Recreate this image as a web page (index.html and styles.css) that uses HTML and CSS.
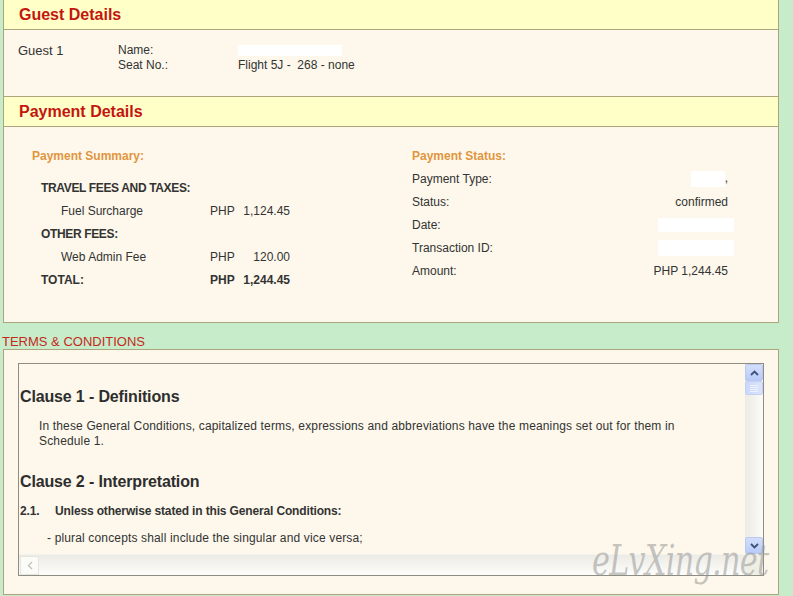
FILE: index.html
```html
<!DOCTYPE html>
<html lang="en">
<head>
    <meta charset="utf-8">
    <title>Booking Details</title>
    <link rel="stylesheet" href="styles.css">
</head>
<body>
    <div class="page">
        <div class="panel">
            <div class="panel-head"><h2>Guest Details</h2></div>
            <div class="panel-body guest">
                <div class="guest-no">Guest 1</div>
                <div class="guest-fields">
                    <span>Name:</span><span><span class="redact name-redact"></span></span>
                    <span>Seat No.:</span><span>Flight 5J -&nbsp; 268 - none</span>
                </div>
            </div>
            <div class="panel-head"><h2>Payment Details</h2></div>
            <div class="panel-body payment">
                <div class="summary">
                    <div class="sub-title">Payment Summary:</div>
                    <div class="fees">
                        <div class="fee-row group">TRAVEL FEES AND TAXES:</div>
                        <div class="fee-row">
                            <span class="fee-label item">Fuel Surcharge</span>
                            <span class="fee-cur">PHP</span>
                            <span class="fee-amt">1,124.45</span>
                        </div>
                        <div class="fee-row group">OTHER FEES:</div>
                        <div class="fee-row">
                            <span class="fee-label item">Web Admin Fee</span>
                            <span class="fee-cur">PHP</span>
                            <span class="fee-amt">120.00</span>
                        </div>
                        <div class="fee-row total">
                            <span class="fee-label">TOTAL:</span>
                            <span class="fee-cur">PHP</span>
                            <span class="fee-amt">1,244.45</span>
                        </div>
                    </div>
                </div>
                <div class="status">
                    <div class="sub-title">Payment Status:</div>
                    <div class="status-row"><span>Payment Type:</span><span><span class="redact type-redact"></span>,</span></div>
                    <div class="status-row"><span>Status:</span><span>confirmed</span></div>
                    <div class="status-row"><span>Date:</span><span class="off-right"><span class="redact date-redact"></span></span></div>
                    <div class="status-row"><span>Transaction ID:</span><span class="off-right"><span class="redact id-redact"></span></span></div>
                    <div class="status-row"><span>Amount:</span><span>PHP 1,244.45</span></div>
                </div>
            </div>
        </div>

        <div class="tc-title">TERMS &amp; CONDITIONS</div>
        <div class="tc-panel">
            <div class="tc-box">
                <div class="tc-content">
                    <h3>Clause 1 - Definitions</h3>
                    <p class="clause-text">In these General Conditions, capitalized terms, expressions and abbreviations have the meanings set out for them in<br>Schedule 1.</p>
                    <h3 class="second">Clause 2 - Interpretation</h3>
                    <p class="clause-num"><span class="num">2.1.</span>Unless otherwise stated in this General Conditions:</p>
                    <p class="clause-item">- plural concepts shall include the singular and vice versa;</p>
                </div>
                <div class="vbar">
                    <div class="sb-btn">
                        <svg width="9" height="6" viewBox="0 0 9 6"><path d="M1 5 L4.5 1.5 L8 5" fill="none" stroke="#3e5278" stroke-width="1.8"/></svg>
                    </div>
                    <div class="sb-thumb"><i></i><i></i><i></i><i></i></div>
                    <div class="sb-track"></div>
                    <div class="sb-btn">
                        <svg width="9" height="6" viewBox="0 0 9 6"><path d="M1 1 L4.5 4.5 L8 1" fill="none" stroke="#3e5278" stroke-width="1.8"/></svg>
                    </div>
                </div>
                <div class="hbar">
                    <div class="sb-btn-off">
                        <svg width="6" height="9" viewBox="0 0 6 9"><path d="M5 1 L1.5 4.5 L5 8" fill="none" stroke="#c4c4bc" stroke-width="1.4"/></svg>
                    </div>
                </div>
                <div class="corner"></div>
            </div>
        </div>
        <div class="watermark">eLvXing.net</div>
    </div>
</body>
</html>
```

FILE: styles.css
```css
body {
    margin: 0;
    background-color: #c7ecca;
    font-family: "Liberation Sans", Arial, sans-serif;
    font-size: 12px;
    color: #333;
}
.page {
    position: relative;
    width: 793px;
    height: 596px;
    overflow: hidden;
}
.panel {
    margin-left: 3px;
    width: 776px;
    box-sizing: border-box;
    border: 1px solid #ada37c;
    border-top: none;
}
.panel-head {
    height: 29px;
    background-color: #ffffc8;
    border-bottom: 1px solid #ada37c;
    padding-left: 15px;
}
.panel-head h2 {
    margin: 0;
    font-size: 16px;
    line-height: 29px;
    color: #c3160f;
}
.panel-body {
    background-color: #fdf8eb;
    border-bottom: 1px solid #ada37c;
}
.panel-body:last-child {
    border-bottom: none;
}
.guest {
    height: 67px;
    box-sizing: border-box;
    padding: 13px 0 0 14px;
    display: flex;
    align-items: flex-start;
}
.guest-no {
    width: 100px;
    font-size: 13px;
    line-height: 15px;
}
.guest-fields {
    display: grid;
    grid-template-columns: 120px auto;
    align-content: start;
    line-height: 15px;
}
.redact {
    display: inline-block;
    background: #fff;
    vertical-align: middle;
}
.name-redact {
    width: 104px;
    height: 11px;
}
.type-redact {
    width: 34px;
    height: 16px;
}
.date-redact {
    width: 76px;
    height: 14px;
}
.id-redact {
    width: 76px;
    height: 16px;
}
.off-right {
    margin-right: -6px;
}
.payment {
    height: 195px;
    box-sizing: border-box;
    padding: 18px 0 0 28px;
    display: flex;
}
.summary {
    width: 380px;
}
.status {
    width: 316px;
}
.sub-title {
    height: 23px;
    line-height: 23px;
    font-weight: bold;
    color: #e2953f;
}
.status .sub-title {
    height: 22px;
}
.fees {
    margin: 8px 0 0 9px;
}
.fee-row {
    height: 23px;
    display: flex;
    align-items: center;
}
.group,
.total {
    font-weight: bold;
}
.group {
    letter-spacing: -0.35px;
}
.fee-label {
    width: 169px;
}
.item {
    padding-left: 20px;
    box-sizing: border-box;
}
.fee-cur {
    width: 30px;
}
.fee-amt {
    width: 50px;
    text-align: right;
}
.status-row {
    height: 23px;
    display: flex;
    align-items: center;
    justify-content: space-between;
}
.tc-title {
    height: 26px;
    box-sizing: border-box;
    padding: 11px 0 0 2px;
    font-size: 13px;
    line-height: 15px;
    color: #c42a1c;
}
.tc-panel {
    margin-left: 3px;
    width: 776px;
    height: 246px;
    box-sizing: border-box;
    border: 1px solid #ada37c;
    background-color: #fdf8eb;
    padding: 13px 14px 0 14px;
}
.tc-box {
    height: 211px;
    border: 1px solid #8f8d83;
    display: grid;
    grid-template-columns: 1fr 18px;
    grid-template-rows: 1fr 21px;
}
.tc-content {
    padding: 23px 0 0 1px;
    overflow: hidden;
}
.tc-content h3 {
    margin: 0;
    font-size: 16px;
    line-height: 20px;
    letter-spacing: -0.15px;
    color: #2e2e2e;
}
.tc-content h3.second {
    margin-top: 23px;
}
.tc-content p {
    margin: 0;
    line-height: 15px;
}
.clause-text {
    margin-top: 12px !important;
    padding-left: 19px;
    letter-spacing: 0.15px;
}
.clause-num {
    margin-top: 12px !important;
    font-weight: bold;
    letter-spacing: -0.15px;
}
.clause-num .num {
    display: inline-block;
    width: 35px;
}
.clause-item {
    margin-top: 12px !important;
    padding-left: 27px;
    letter-spacing: 0.15px;
}
.vbar {
    display: flex;
    flex-direction: column;
    background: linear-gradient(to right, #ecebe4, #fbfbf8);
}
.sb-btn {
    height: 17px;
    box-sizing: border-box;
    border: 1px solid #b9c9f2;
    border-radius: 2px;
    background: linear-gradient(#d3defc, #b8cbf8);
    display: flex;
    align-items: center;
    justify-content: center;
}
.sb-thumb {
    height: 14px;
    box-sizing: border-box;
    border: 1px solid #c3d0f3;
    border-radius: 2px;
    background: linear-gradient(to right, #cad8fb, #dbe4fc);
    display: flex;
    flex-direction: column;
    align-items: center;
    justify-content: center;
    gap: 1px;
}
.sb-thumb i {
    display: block;
    width: 8px;
    height: 1px;
    background: #eef2fe;
}
.sb-track {
    flex: 1;
}
.hbar {
    background: linear-gradient(#ecebe5, #fdfdfb);
    border-top: 1px solid #f4f3ee;
}
.sb-btn-off {
    width: 19px;
    height: 19px;
    box-sizing: border-box;
    border: 1px solid #e6e5de;
    background: #fbfbf8;
    display: flex;
    align-items: center;
    justify-content: center;
    margin: 1px 0 0 1px;
}
.corner {
    background: #efeee5;
}
.watermark {
    position: absolute;
    left: 592px;
    top: 536px;
    font-family: "DejaVu Serif", serif;
    font-style: italic;
    font-size: 42px;
    letter-spacing: -1px;
    color: rgba(150, 150, 150, 0.55);
    transform: scaleX(0.72);
    transform-origin: left top;
}
```
